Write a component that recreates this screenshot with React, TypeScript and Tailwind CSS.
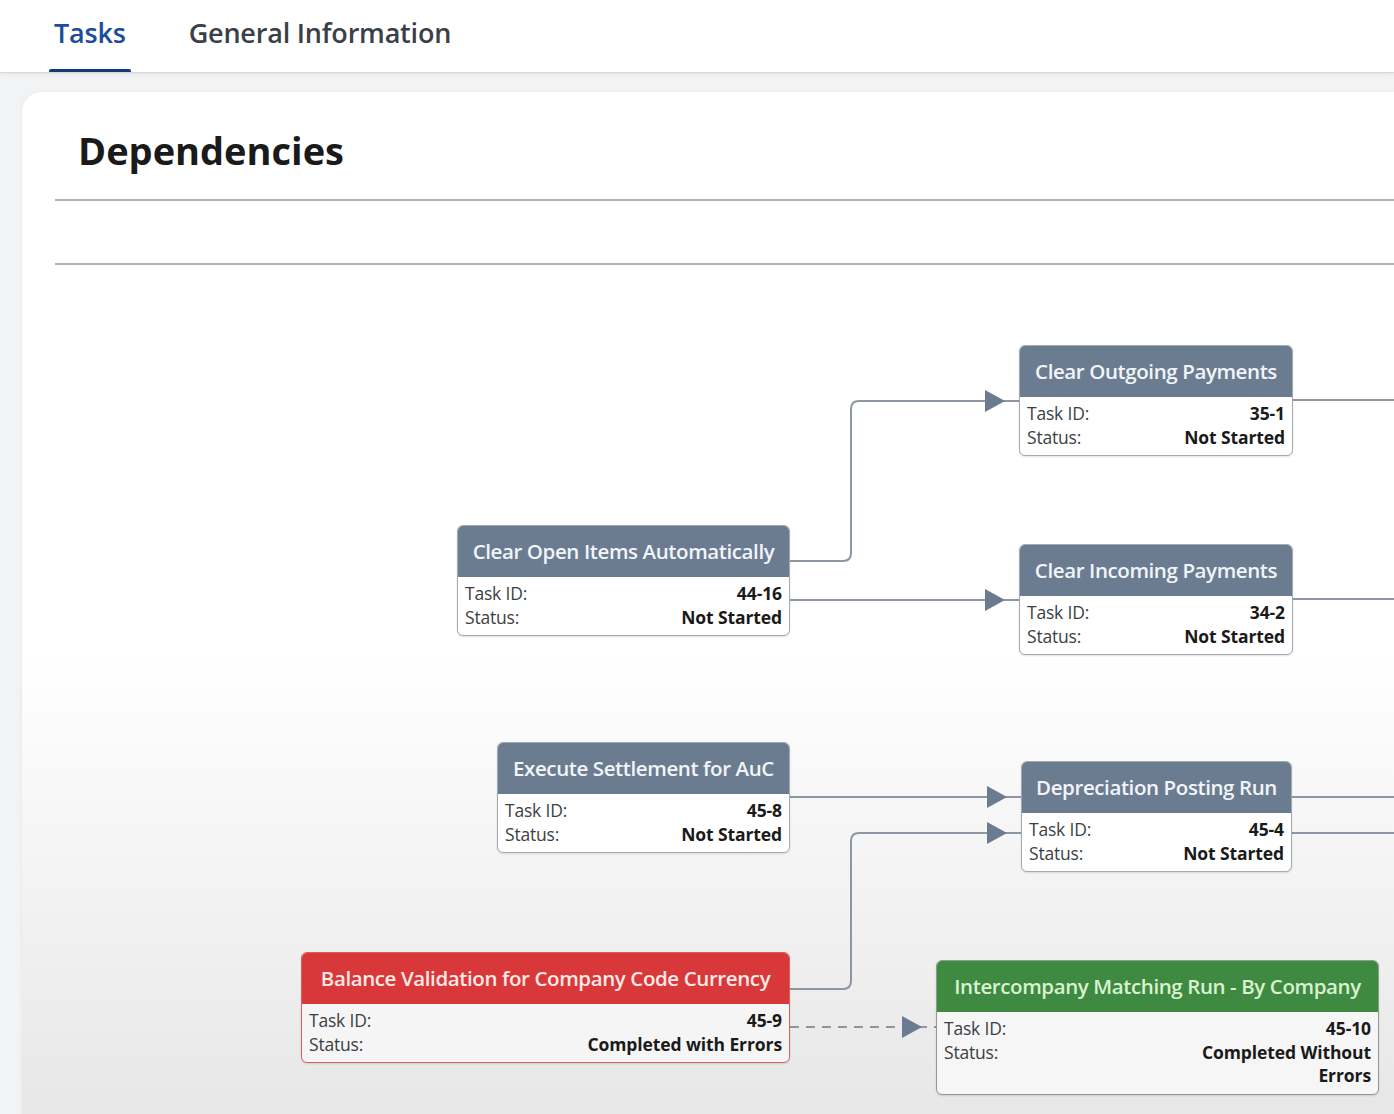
import React from "react";

type Row = { label: string; value: React.ReactNode };
type NodeProps = {
  x: number;
  y: number;
  w: number;
  title: string;
  rows: Row[];
  variant?: "slate" | "red" | "green";
};

function TaskNode({ x, y, w, title, rows, variant = "slate" }: NodeProps) {
  const wrap =
    variant === "red"
      ? "border-[#d8615c] bg-[#f6f5f5]"
      : variant === "green"
      ? "border-[#8f9b8f] bg-[#f5f6f5]"
      : "border-[#a2aab4] bg-white";
  const head =
    variant === "red"
      ? "bg-[#d8383a] text-[#fde9e6]"
      : variant === "green"
      ? "bg-[#3e8a40] text-[#d9f2d2]"
      : "bg-[#6b7c91] text-[#f1f5f9]";
  return (
    <div
      className={`absolute rounded-[6px] border-[1.5px] overflow-hidden shadow-[0_1px_2px_rgba(0,0,0,0.12)] ${wrap}`}
      style={{ left: x, top: y, width: w }}
    >
      <div
        className={`h-[51px] flex items-center justify-center text-[20.5px] font-semibold tracking-[-0.4px] whitespace-nowrap ${head}`}
      >
        {title}
      </div>
      <div className="px-[7px] pt-[5px] pb-[6px] text-[17.5px] leading-[23.5px]">
        {rows.map((r) => (
          <div key={r.label} className="flex justify-between items-start">
            <span className="text-[#3b3f44] tracking-[-0.2px]">{r.label}</span>
            <span className="font-bold text-[#1a1a1a] text-right text-[17.5px] tracking-[-0.1px]">
              {r.value}
            </span>
          </div>
        ))}
      </div>
    </div>
  );
}

function Arrow({ x, y }: { x: number; y: number }) {
  return <polygon points={`${x},${y - 11} ${x + 20},${y} ${x},${y + 11}`} fill="#6b7c91" />;
}

export default function App() {
  const line = "#8d97a2";
  return (
    <div
      className="w-[1394px] h-[1114px] overflow-hidden bg-[#eef0f2] flex flex-col"
      style={{ fontFamily: '"Open Sans", "Noto Sans", sans-serif' }}
    >
      {/* Tab bar */}
      <div className="h-[73px] shrink-0 bg-white border-b border-[#d6d8da] shadow-[0_1px_3px_rgba(0,0,0,0.08)] flex items-stretch pl-[49px] gap-[58px] relative z-10">
        <div className="relative flex items-center px-[5px] pb-[6px]">
          <span className="text-[27px] font-semibold text-[#1b4d9a] tracking-[-0.2px]">Tasks</span>
          <div className="absolute left-0 right-0 bottom-0 h-[3px] bg-[#163a78] rounded-t-[2px]" />
        </div>
        <div className="flex items-center pb-[6px]">
          <span className="text-[27px] font-semibold text-[#3a4048] tracking-[-0.2px]">
            General Information
          </span>
        </div>
      </div>

      {/* Body */}
      <div className="flex-1 flex pl-[22px] pt-[19px] bg-[#f2f3f4]">
        <div className="flex-1 flex flex-col rounded-tl-[20px] bg-linear-to-b from-white via-white via-55% to-[#e7e7e7] shadow-[0_0_4px_rgba(0,0,0,0.06)]">
          <div className="h-[107px] pl-[56px] pt-[33px]">
            <h1 className="text-[38px] leading-[50px] font-bold text-[#1a1a1a]">Dependencies</h1>
          </div>
          <div className="ml-[33px] h-[2px] bg-[#b3b3b3]" />
          <div className="h-[62px]" />
          <div className="ml-[33px] h-[2px] bg-[#b3b3b3]" />

          {/* Diagram canvas */}
          <div className="relative flex-1">
            <svg
              className="absolute left-0 top-0"
              width="1400"
              height="860"
              viewBox="0 0 1400 860"
              fill="none"
            >
              <path
                d="M768 296 H821 Q829 296 829 288 V144 Q829 136 837 136 H997"
                stroke={line}
                strokeWidth="2"
              />
              <Arrow x={963} y={136} />
              <path d="M768 335 H997" stroke={line} strokeWidth="2" />
              <Arrow x={963} y={335} />
              <path d="M1271 135 H1380" stroke={line} strokeWidth="2" />
              <path d="M1271 334 H1380" stroke={line} strokeWidth="2" />
              <path d="M768 532 H999" stroke={line} strokeWidth="2" />
              <Arrow x={965} y={532} />
              <path
                d="M768 724 H821 Q829 724 829 716 V576 Q829 568 837 568 H999"
                stroke={line}
                strokeWidth="2"
              />
              <Arrow x={965} y={568} />
              <path d="M1270 532 H1380" stroke={line} strokeWidth="2" />
              <path d="M1270 568 H1380" stroke={line} strokeWidth="2" />
              <path d="M768 762 H914" stroke={line} strokeWidth="2" strokeDasharray="9 7" />
              <Arrow x={880} y={762} />
            </svg>

            <TaskNode
              x={997}
              y={80}
              w={274}
              title="Clear Outgoing Payments"
              rows={[
                { label: "Task ID:", value: "35-1" },
                { label: "Status:", value: "Not Started" },
              ]}
            />
            <TaskNode
              x={997}
              y={279}
              w={274}
              title="Clear Incoming Payments"
              rows={[
                { label: "Task ID:", value: "34-2" },
                { label: "Status:", value: "Not Started" },
              ]}
            />
            <TaskNode
              x={435}
              y={260}
              w={333}
              title="Clear Open Items Automatically"
              rows={[
                { label: "Task ID:", value: "44-16" },
                { label: "Status:", value: "Not Started" },
              ]}
            />
            <TaskNode
              x={475}
              y={477}
              w={293}
              title="Execute Settlement for AuC"
              rows={[
                { label: "Task ID:", value: "45-8" },
                { label: "Status:", value: "Not Started" },
              ]}
            />
            <TaskNode
              x={999}
              y={496}
              w={271}
              title="Depreciation Posting Run"
              rows={[
                { label: "Task ID:", value: "45-4" },
                { label: "Status:", value: "Not Started" },
              ]}
            />
            <TaskNode
              x={279}
              y={687}
              w={489}
              variant="red"
              title="Balance Validation for Company Code Currency"
              rows={[
                { label: "Task ID:", value: "45-9" },
                { label: "Status:", value: "Completed with Errors" },
              ]}
            />
            <TaskNode
              x={914}
              y={695}
              w={443}
              variant="green"
              title="Intercompany Matching Run - By Company"
              rows={[
                { label: "Task ID:", value: "45-10" },
                {
                  label: "Status:",
                  value: (
                    <>
                      Completed Without
                      <br />
                      Errors
                    </>
                  ),
                },
              ]}
            />
          </div>
        </div>
      </div>
    </div>
  );
}
